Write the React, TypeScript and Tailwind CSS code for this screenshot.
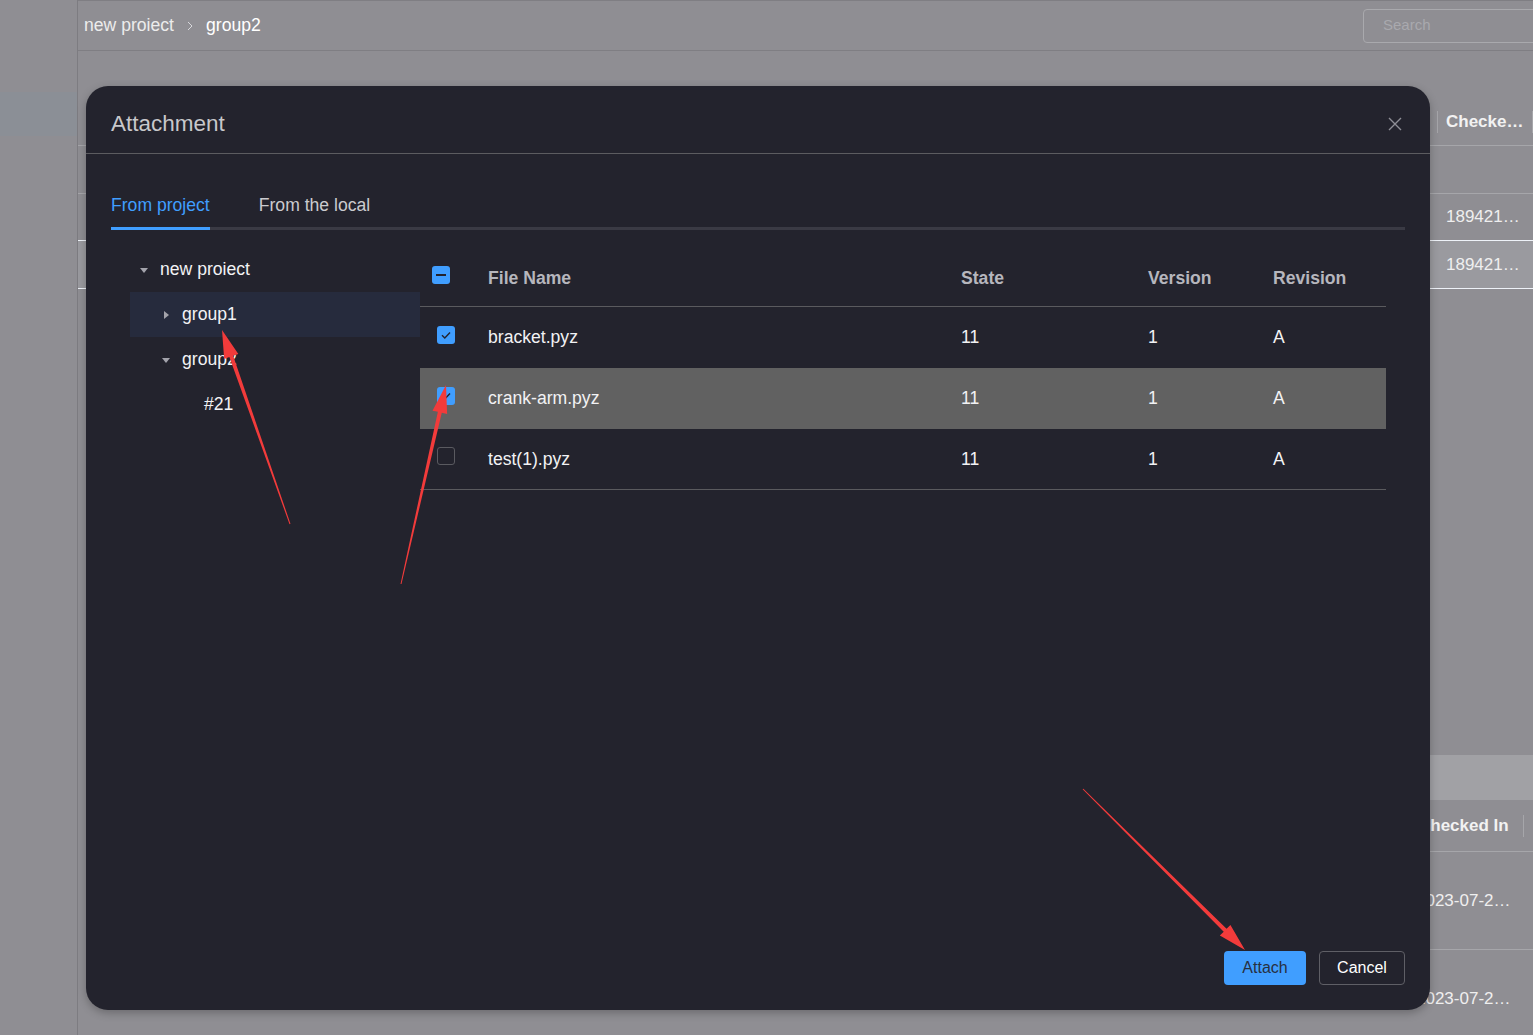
import React from 'react';

type TreeNode = { label: string; level: number; caret?: 'down' | 'right'; active?: boolean };

const treeNodes: TreeNode[] = [
  { label: 'new proiect', level: 0, caret: 'down' },
  { label: 'group1', level: 1, caret: 'right', active: true },
  { label: 'group2', level: 1, caret: 'down' },
  { label: '#21', level: 2 },
];

const indent = ['pl-[7px]', 'pl-[29px]', 'pl-[51px]'];

const files = [
  { name: 'bracket.pyz', state: '11', version: '1', revision: 'A', checked: true },
  { name: 'crank-arm.pyz', state: '11', version: '1', revision: 'A', checked: true, hover: true },
  { name: 'test(1).pyz', state: '11', version: '1', revision: 'A', checked: false },
];

const arrows = [
  { x1: 290, y1: 524, x2: 222, y2: 330 },
  { x1: 401, y1: 584, x2: 446, y2: 385 },
  { x1: 1083, y1: 789, x2: 1245, y2: 950 },
];

function arrowPoints(a: { x1: number; y1: number; x2: number; y2: number }) {
  const dx = a.x2 - a.x1;
  const dy = a.y2 - a.y1;
  const len = Math.hypot(dx, dy);
  const ux = dx / len;
  const uy = dy / len;
  const nx = -uy;
  const ny = ux;
  const headLen = 28;
  const neckX = a.x2 - ux * headLen;
  const neckY = a.y2 - uy * headLen;
  const p = (x: number, y: number, w: number) => `${x + nx * w},${y + ny * w}`;
  return [
    p(a.x1, a.y1, 0.5),
    p(neckX, neckY, 2),
    p(neckX, neckY, 7.5),
    `${a.x2},${a.y2}`,
    p(neckX, neckY, -7.5),
    p(neckX, neckY, -2),
    p(a.x1, a.y1, -0.5),
  ].join(' ');
}

function Caret({ dir }: { dir: 'down' | 'right' }) {
  return (
    <svg width="14" height="14" viewBox="0 0 14 14" className="shrink-0">
      {dir === 'down' ? (
        <polygon points="3,5 11,5 7,10" fill="#a3a3ab" />
      ) : (
        <polygon points="5,3 10,7 5,11" fill="#a3a3ab" />
      )}
    </svg>
  );
}

function Checkbox({ state }: { state: 'checked' | 'none' | 'partial' }) {
  if (state === 'none') {
    return <div className="w-[18px] h-[18px] rounded-[3px] border border-[#5a5a60]" />;
  }
  return (
    <div className="w-[18px] h-[18px] rounded-[3px] bg-[#409eff] flex items-center justify-center">
      {state === 'checked' ? (
        <svg width="12" height="12" viewBox="0 0 12 12">
          <path d="M2 6.2 L4.8 9 L10 3.4" fill="none" stroke="#23232d" strokeWidth="1.4" />
        </svg>
      ) : (
        <div className="w-[10px] h-[2px] bg-[#23232d]" />
      )}
    </div>
  );
}

export default function App() {
  return (
    <div className="relative w-[1533px] h-[1035px] overflow-hidden flex bg-[#8f8e93] font-['Liberation_Sans',Arial,sans-serif]">
      {/* sidebar */}
      <div className="w-[78px] shrink-0 border-r border-[#7d7c81] pt-[92px]">
        <div className="h-[44px] bg-[#8b8f96]" />
      </div>

      {/* page behind the dialog */}
      <div className="flex-1 flex flex-col min-w-0">
        <div className="h-[51px] shrink-0 border-t border-b border-[#7f7e83] flex items-center pl-[6px] overflow-hidden">
          <span className="text-[17.6px] text-[#ececec]">new proiect</span>
          <svg width="10" height="14" viewBox="0 0 10 14" className="mx-[11px]">
            <path d="M3 3 L7 7 L3 11" fill="none" stroke="#d8d8dc" strokeWidth="1" />
          </svg>
          <span className="text-[17.6px] text-white">group2</span>
          <div className="ml-auto -mr-[12px] w-[182px] h-[34px] shrink-0 rounded-[4px] border border-[#a9a9ad] flex items-center pl-[19px] text-[15px] text-[#a9a9ae]">
            Search
          </div>
        </div>

        <div className="pt-[47px]">
          <div className="h-[48px] flex items-center border-b border-[#a6a6aa]">
            <div className="flex-1" />
            <span className="w-px h-[22px] bg-[#a6a6aa]" />
            <span className="w-[82px] ml-[8px] truncate text-[17px] font-bold text-[#f2f2f2]">Checked By</span>
            <span className="ml-[4px] w-px h-[22px] bg-[#a6a6aa]" />
          </div>
          <div className="h-[48px] border-b border-[#a6a6aa]" />
          <div className="h-[47px] flex items-center border-b border-[#eef2f8]">
            <div className="flex-1" />
            <span className="w-[82px] mr-[5px] truncate text-[17px] text-[#efefef]">1894213370</span>
          </div>
          <div className="h-[48px] flex items-center border-b border-[#eef2f8] bg-[#9a9a9f]">
            <div className="flex-1" />
            <span className="w-[82px] mr-[5px] truncate text-[17px] text-[#efefef]">1894213371</span>
          </div>
        </div>

        <div className="mt-[466px] ml-[12px]">
          <div className="h-[45px] bg-[#a1a1a5]" />
          <div className="h-[52px] flex items-center border-b border-[#a6a6aa]">
            <div className="flex-1" />
            <span className="w-[109px] pl-[4px] truncate text-[17px] font-bold text-[#f2f2f2]">Checked In</span>
            <span className="w-px h-[22px] bg-[#a6a6aa] mr-[9px]" />
          </div>
          <div className="h-[98px] flex items-center border-b border-[#a6a6aa]">
            <div className="flex-1" />
            <span className="w-[100px] mr-[17px] truncate text-[17px] text-[#efefef]">2023-07-21 10:12</span>
          </div>
          <div className="h-[98px] flex items-center">
            <div className="flex-1" />
            <span className="w-[100px] mr-[17px] truncate text-[17px] text-[#efefef]">2023-07-21 10:15</span>
          </div>
        </div>
      </div>

      {/* dialog */}
      <div className="absolute left-[86px] top-[86px] w-[1344px] h-[924px] rounded-[22px] bg-[#23232d] shadow-[0_3px_8px_rgba(0,0,0,0.25)] flex flex-col">
        <div className="h-[68px] shrink-0 border-b border-[#5c5c60] flex items-center justify-between pl-[25px] pr-[28px] pt-[9px]">
          <span className="text-[22.5px] text-[#c8c8cb]">Attachment</span>
          <svg width="14" height="14" viewBox="0 0 14 14">
            <path d="M1 1 L13 13 M13 1 L1 13" stroke="#8e8e96" strokeWidth="1.4" />
          </svg>
        </div>

        <div className="mx-[25px] pt-[30px] flex gap-[49px] border-b-[3px] border-[#3a3a44]">
          <div className="h-[46px] -mb-[3px] flex items-center border-b-[3px] border-[#409eff] text-[17.6px] text-[#409eff]">
            From project
          </div>
          <div className="h-[46px] -mb-[3px] flex items-center border-b-[3px] border-transparent text-[17.6px] text-[#cbcbcf]">
            From the local
          </div>
        </div>

        <div className="flex px-[44px] pt-[17px]">
          <div className="w-[290px] shrink-0">
            {treeNodes.map((node) => (
              <div
                key={node.label}
                className={`h-[45px] flex items-center ${indent[node.level]} ${node.active ? 'bg-[#262b3d]' : ''}`}
              >
                {node.caret ? <Caret dir={node.caret} /> : <span className="w-[14px] shrink-0" />}
                <span className="ml-[9px] text-[17.6px] text-[#f2f2f4]">{node.label}</span>
              </div>
            ))}
          </div>

          <div className="flex-1 mt-[3px]">
            <div className="h-[57px] grid grid-cols-[68px_473px_187px_125px_1fr] items-center border-b border-[#5a5a5e] text-[17.6px] font-bold text-[#b6b6bd]">
              <div className="pl-[12px] -mt-[6px]">
                <Checkbox state="partial" />
              </div>
              <div>File Name</div>
              <div>State</div>
              <div>Version</div>
              <div>Revision</div>
            </div>
            {files.map((f, i) => (
              <div
                key={f.name}
                className={`h-[61px] grid grid-cols-[68px_473px_187px_125px_1fr] items-center text-[17.6px] text-[#f2f2f4] ${
                  f.hover ? 'bg-[#616161]' : ''
                } ${i === files.length - 1 ? 'border-b border-[#5a5a5e]' : ''}`}
              >
                <div className="pl-[17px] -mt-[6px]">
                  <Checkbox state={f.checked ? 'checked' : 'none'} />
                </div>
                <div>{f.name}</div>
                <div>{f.state}</div>
                <div>{f.version}</div>
                <div>{f.revision}</div>
              </div>
            ))}
          </div>
        </div>

        <div className="mt-auto flex justify-end gap-[13px] px-[25px] pb-[25px]">
          <button className="w-[82px] h-[34px] rounded-[4px] bg-[#409eff] text-[16px] text-[#27303f]">Attach</button>
          <button className="w-[86px] h-[34px] rounded-[4px] border border-[#5f5f66] text-[16px] text-white">Cancel</button>
        </div>
      </div>

      {/* annotation arrows */}
      <svg className="absolute inset-0 pointer-events-none" width="1533" height="1035">
        {arrows.map((a, i) => (
          <polygon key={i} points={arrowPoints(a)} fill="#f23b3b" />
        ))}
      </svg>
    </div>
  );
}
